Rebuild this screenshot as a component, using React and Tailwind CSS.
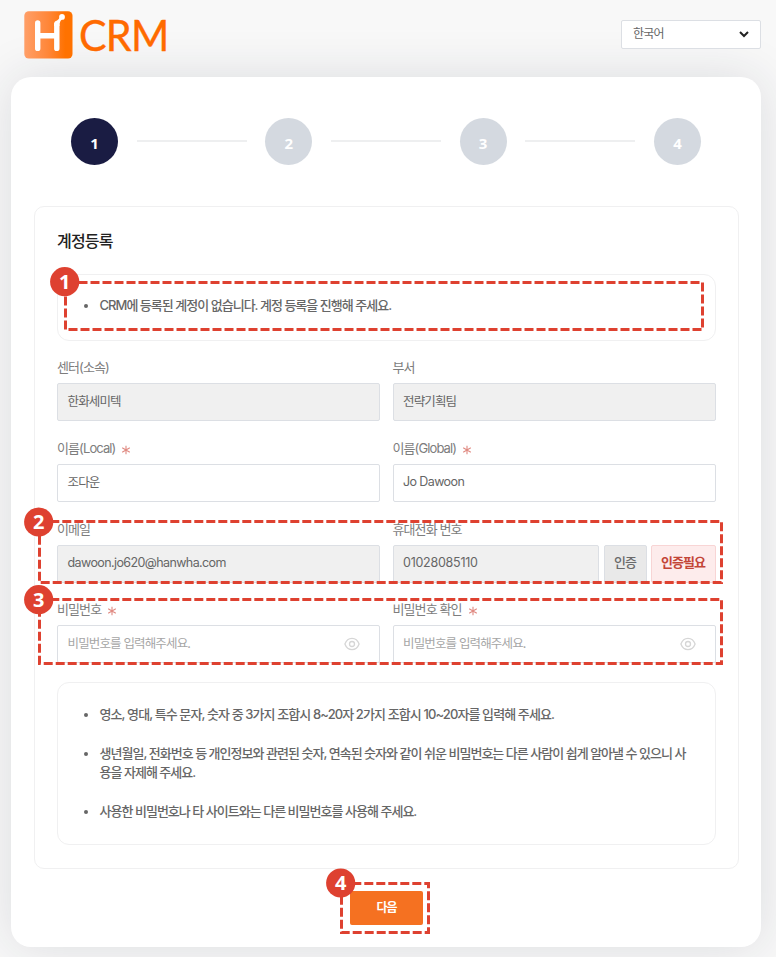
import React from "react";

const STEPS = [1, 2, 3, 4];

function Logo() {
  return (
    <div className="flex h-12 items-center">
      <svg width="49" height="48" viewBox="0 0 49 48" className="shrink-0">
        <defs>
          <linearGradient id="logoFill" x1="0" y1="0" x2="1" y2="0">
            <stop offset="0" stopColor="#ff9f68" />
            <stop offset="0.5" stopColor="#ff8638" />
            <stop offset="0.85" stopColor="#ff7200" />
            <stop offset="1" stopColor="#ff7200" />
          </linearGradient>
        </defs>
        <rect x="0.3" y="0.3" width="48.2" height="47.2" rx="4.5" fill="url(#logoFill)" />
        <path d="M13.7 12V37.4M32.8 37.4V14M13.7 24.8H32.8" fill="none" stroke="#fff" strokeWidth="5.4" strokeLinecap="round" />
        <path d="M30.1 15V12Q30.4 10 33 9.4Q34.6 8.6 35.8 6.4L38.2 8Q35.5 10.2 35.5 13V15Z" fill="#fff" />
        <circle cx="38" cy="5.9" r="2.9" fill="#fff" />
      </svg>
      <span className="ml-1.5 origin-left scale-x-[0.96] font-[Lato,sans-serif] text-[43px] leading-[48px] tracking-[-0.8px] text-[#ff6a00] [-webkit-text-stroke:0.4px_#ff6a00]">CRM</span>
    </div>
  );
}

function Required() {
  return (
    <svg width="10" height="10" viewBox="0 0 10 10" className="mt-0.5 ml-1.5">
      <path d="M5 0.8V9.2M1.2 2.8L8.8 7.2M8.8 2.8L1.2 7.2" stroke="#e08a82" strokeWidth="1.1" fill="none" />
    </svg>
  );
}

function Label({ children, required }) {
  return (
    <div className="flex h-[30px] items-center text-[13px] tracking-[-0.9px] text-[#7d7d7d]">
      <span>{children}</span>
      {required && <Required />}
    </div>
  );
}

const INPUT_TEXT = {
  korean: "tracking-[-0.85px] pt-px",
  latin: "tracking-[-0.6px] pb-0.5",
  digits: "tracking-[-0.25px] pb-0.5",
};

function Input({ value, placeholder, disabled, eye, kind = "korean" }) {
  return (
    <div className={`flex h-[38px] min-w-0 flex-1 items-center justify-between rounded-[2px] border border-[#dcdfe4] pr-[19px] pl-[9.5px] text-[12.5px] ${INPUT_TEXT[kind]} ${disabled ? "bg-[#f0f0f0]" : "bg-white"}`}>
      <span className={value ? "text-[#666]" : "text-[#a6a6a6]"}>{value || placeholder}</span>
      {eye && (
        <svg width="16" height="14" viewBox="0 0 16 14" fill="none" stroke="#d6d6d6" strokeWidth="1.3" className="mb-0.5">
          <path d="M0.9 7C2.2 3.4 4.9 1.4 8 1.4S13.8 3.4 15.1 7C13.8 10.6 11.1 12.6 8 12.6S2.2 10.6 0.9 7Z" />
          <circle cx="8" cy="7" r="2.5" />
        </svg>
      )}
    </div>
  );
}

function Field({ label, required, children }) {
  return (
    <div className="min-w-0 flex-1">
      <Label required={required}>{label}</Label>
      <div className="flex">{children}</div>
    </div>
  );
}

function Bullet({ children, loose }) {
  return (
    <li className={`flex ${loose ? "tracking-[-0.9px]" : "tracking-[-0.98px]"}`}>
      <span className="mt-2 mr-[11.5px] size-1 shrink-0 rounded-full bg-[#666]" />
      <span className="whitespace-nowrap">{children}</span>
    </li>
  );
}

function Frame({ x, y, w, h, offset }) {
  return <rect x={x} y={y} width={w} height={h} fill="none" stroke="#de4130" strokeWidth="3" strokeDasharray="9 3" strokeDashoffset={offset} />;
}

function Marker({ n, x, y }) {
  return (
    <g>
      <circle cx={x} cy={y} r="14.6" fill="#de4130" />
      <text x={x} y={y + 7} textAnchor="middle" className="fill-white font-['Noto_Sans',sans-serif] text-[20px] font-bold">{n}</text>
    </g>
  );
}

export default function App() {
  return (
    <div className="relative h-[957px] w-[776px] overflow-hidden bg-[#f8f8f8] font-[Inter,'Noto_Sans_CJK_KR',sans-serif]">
      <header className="flex h-[77px] items-start justify-between pt-[11px] pr-[15px] pl-6">
        <Logo />
        <div className="relative z-10 mt-[9px] flex h-[29px] w-[140px] items-center justify-between rounded-[2px] border border-[#dcdfe4] bg-white pr-[11px] pb-px pl-[11px] text-[12px] tracking-[-0.8px] text-[#666]">
          한국어
          <svg width="10" height="7" viewBox="0 0 10 7">
            <path d="M1 1L5 5L9 1" fill="none" stroke="#222" strokeWidth="2" />
          </svg>
        </div>
      </header>

      <main className="ml-[11px] flex h-[870px] w-[750px] flex-col rounded-[20px] bg-white px-[23px] pt-10 shadow-[0_0_50px_rgba(30,40,60,0.13)]">
        <div className="flex h-[48px] w-[705px] items-center justify-between pr-[38px] pl-[37px]">
          {STEPS.map((n) => (
            <React.Fragment key={n}>
              {n > 1 && <span className="h-[2px] w-[110px] bg-[#eeeff0]" />}
              <span className={`flex size-[47px] items-center justify-center rounded-full pt-1 font-['Noto_Sans',sans-serif] text-[15px] font-bold text-white ${n === 1 ? "bg-[#1a1c43]" : "bg-[#d4d9e0]"}`}>{n}</span>
            </React.Fragment>
          ))}
        </div>

        <section className="mt-[41px] h-[663px] w-[704.5px] rounded-[10px] border border-[#f0f0f1] px-[22px]">
          <h1 className="flex h-[67px] items-center text-[16px] font-medium tracking-[-0.8px] text-[#222]">계정등록</h1>
          <div className="flex h-[67px] items-center rounded-[12px] border border-[#f0f0f1] pl-[26px] text-[13px] leading-[19.5px] font-medium text-[#666]">
            <ul className="-mt-[3px]">
              <Bullet>CRM에 등록된 계정이 없습니다. 계정 등록을 진행해 주세요.</Bullet>
            </ul>
          </div>

          <div className="mt-3 flex gap-[12.5px]">
            <Field label="센터(소속)"><Input value="한화세미텍" disabled /></Field>
            <Field label="부서"><Input value="전략기획팀" disabled /></Field>
          </div>
          <div className="mt-[13px] flex gap-[12.5px]">
            <Field label="이름(Local)" required><Input value="조다운" /></Field>
            <Field label="이름(Global)" required><Input value="Jo Dawoon" kind="latin" /></Field>
          </div>
          <div className="mt-[13px] flex gap-[12.5px]">
            <Field label="이메일"><Input value="dawoon.jo620@hanwha.com" kind="latin" disabled /></Field>
            <Field label="휴대전화 번호">
              <Input value="01028085110" kind="digits" disabled />
              <span className="ml-[5px] flex h-[38px] w-[43px] items-center justify-center rounded-[2px] border border-[#dcdfe4] bg-[#e9e9e9] pb-0.5 text-[13px] font-medium tracking-[-0.9px] text-[#6a6a6a]">인증</span>
              <span className="ml-1 flex h-[38px] w-[65px] items-center justify-center rounded-[2px] border border-[#f8d5d5] bg-[#fdecec] pb-0.5 text-[13px] font-bold tracking-[-1px] text-[#c34537]">인증필요</span>
            </Field>
          </div>
          <div className="mt-3 flex gap-[12.5px]">
            <Field label="비밀번호" required><Input placeholder="비밀번호를 입력해주세요." eye /></Field>
            <Field label="비밀번호 확인" required><Input placeholder="비밀번호를 입력해주세요." eye /></Field>
          </div>

          <div className="mt-[19px] h-[163px] rounded-[12px] border border-[#f0f0f1] pt-[22px] pl-[26px] text-[13px] leading-[19.5px] font-medium text-[#666]">
            <ul className="flex flex-col gap-[19px]">
              <Bullet loose>영소, 영대, 특수 문자, 숫자 중 3가지 조합시 8~20자 2가지 조합시 10~20자를 입력해 주세요.</Bullet>
              <Bullet>생년월일, 전화번호 등 개인정보와 관련된 숫자, 연속된 숫자와 같이 쉬운 비밀번호는 다른 사람이 쉽게 알아낼 수 있으니 사<br />용을 자제해 주세요.</Bullet>
              <Bullet>사용한 비밀번호나 타 사이트와는 다른 비밀번호를 사용해 주세요.</Bullet>
            </ul>
          </div>
        </section>

        <button className="mt-[22px] ml-[316px] h-[34px] w-[73px] rounded-[2px] bg-[#f57121] text-[12px] font-bold tracking-[-1px] text-white">다음</button>
      </main>

      {/* Numbered guide callouts above the form */}
      <svg width="776" height="957" viewBox="0 0 776 957" className="pointer-events-none absolute top-0 left-0 z-20">
        <Frame x={65.5} y={282.5} w={637} h={47} offset={-1} />
        <Frame x={39.5} y={521.5} w={682} h={61} offset={1.2} />
        <Frame x={39.5} y={599.5} w={682} h={64} offset={1.2} />
        <Frame x={341.5} y={883.5} w={87} h={49} offset={1.2} />
        <Marker n={1} x={64.7} y={281.7} />
        <Marker n={2} x={38.7} y={522} />
        <Marker n={3} x={38.7} y={599.7} />
        <Marker n={4} x={340.7} y={883} />
      </svg>
    </div>
  );
}
